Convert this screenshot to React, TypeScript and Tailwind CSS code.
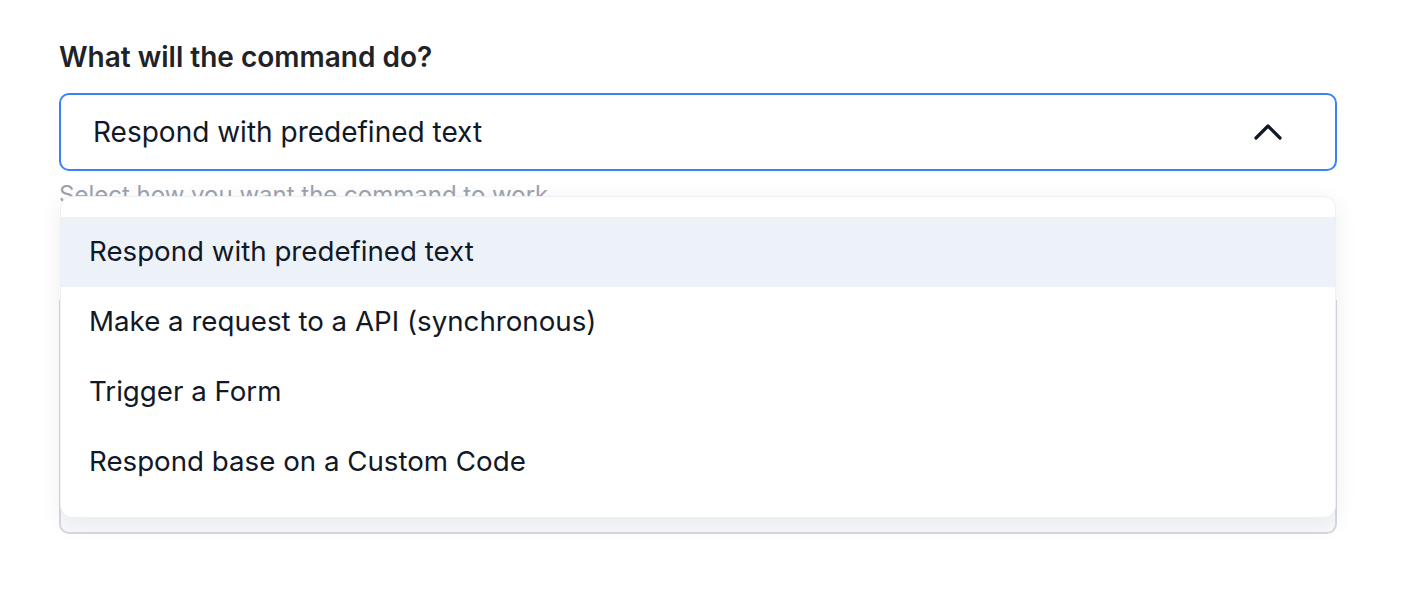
import { ChevronUp } from "lucide-react";

const options = [
  "Respond with predefined text",
  "Make a request to a API (synchronous)",
  "Trigger a Form",
  "Respond base on a Custom Code",
];

export default function App() {
  const selected = options[0];

  return (
    <main className="min-h-[598px] bg-white pl-[59px] pr-[75px] pt-[38px] font-['Inter','Noto_Sans',sans-serif] text-[#111827]">
      <h1 className="text-[28px] font-semibold leading-[38px] text-[#1f2328]">What will the command do?</h1>

      <div className="relative mt-[17px]">
        <button className="flex h-[78px] w-full items-center justify-between rounded-[10px] border-2 border-[#3b82f6] pl-[32px] pr-[43px] text-left text-[28px] text-[#111827]">
          {selected}
          <ChevronUp size={48} strokeWidth={1.6} className="text-[#111827]" />
        </button>

        <p className="mt-[9px] text-[24px] leading-[30px] text-[#9ca3af]">Select how you want the command to work</p>

        {/* field underneath the open menu, only its bottom edge shows */}
        <div className="mt-[90px] h-[234px] rounded-b-[10px] border-2 border-t-0 border-[#d6d9e0] bg-[#f8f9fb]" />

        <div className="absolute left-px right-px top-[103px] rounded-[12px] border border-[#eef0f4] bg-white py-[20px] shadow-[0_6px_24px_rgba(15,23,42,0.07)]">
          {options.map((option) => (
            <div
              key={option}
              className={`flex h-[70px] items-center px-[28px] text-[27.7px] text-[#111827] ${option === selected ? "bg-[#edf2f9]" : ""}`}
            >
              {option}
            </div>
          ))}
        </div>
      </div>
    </main>
  );
}
